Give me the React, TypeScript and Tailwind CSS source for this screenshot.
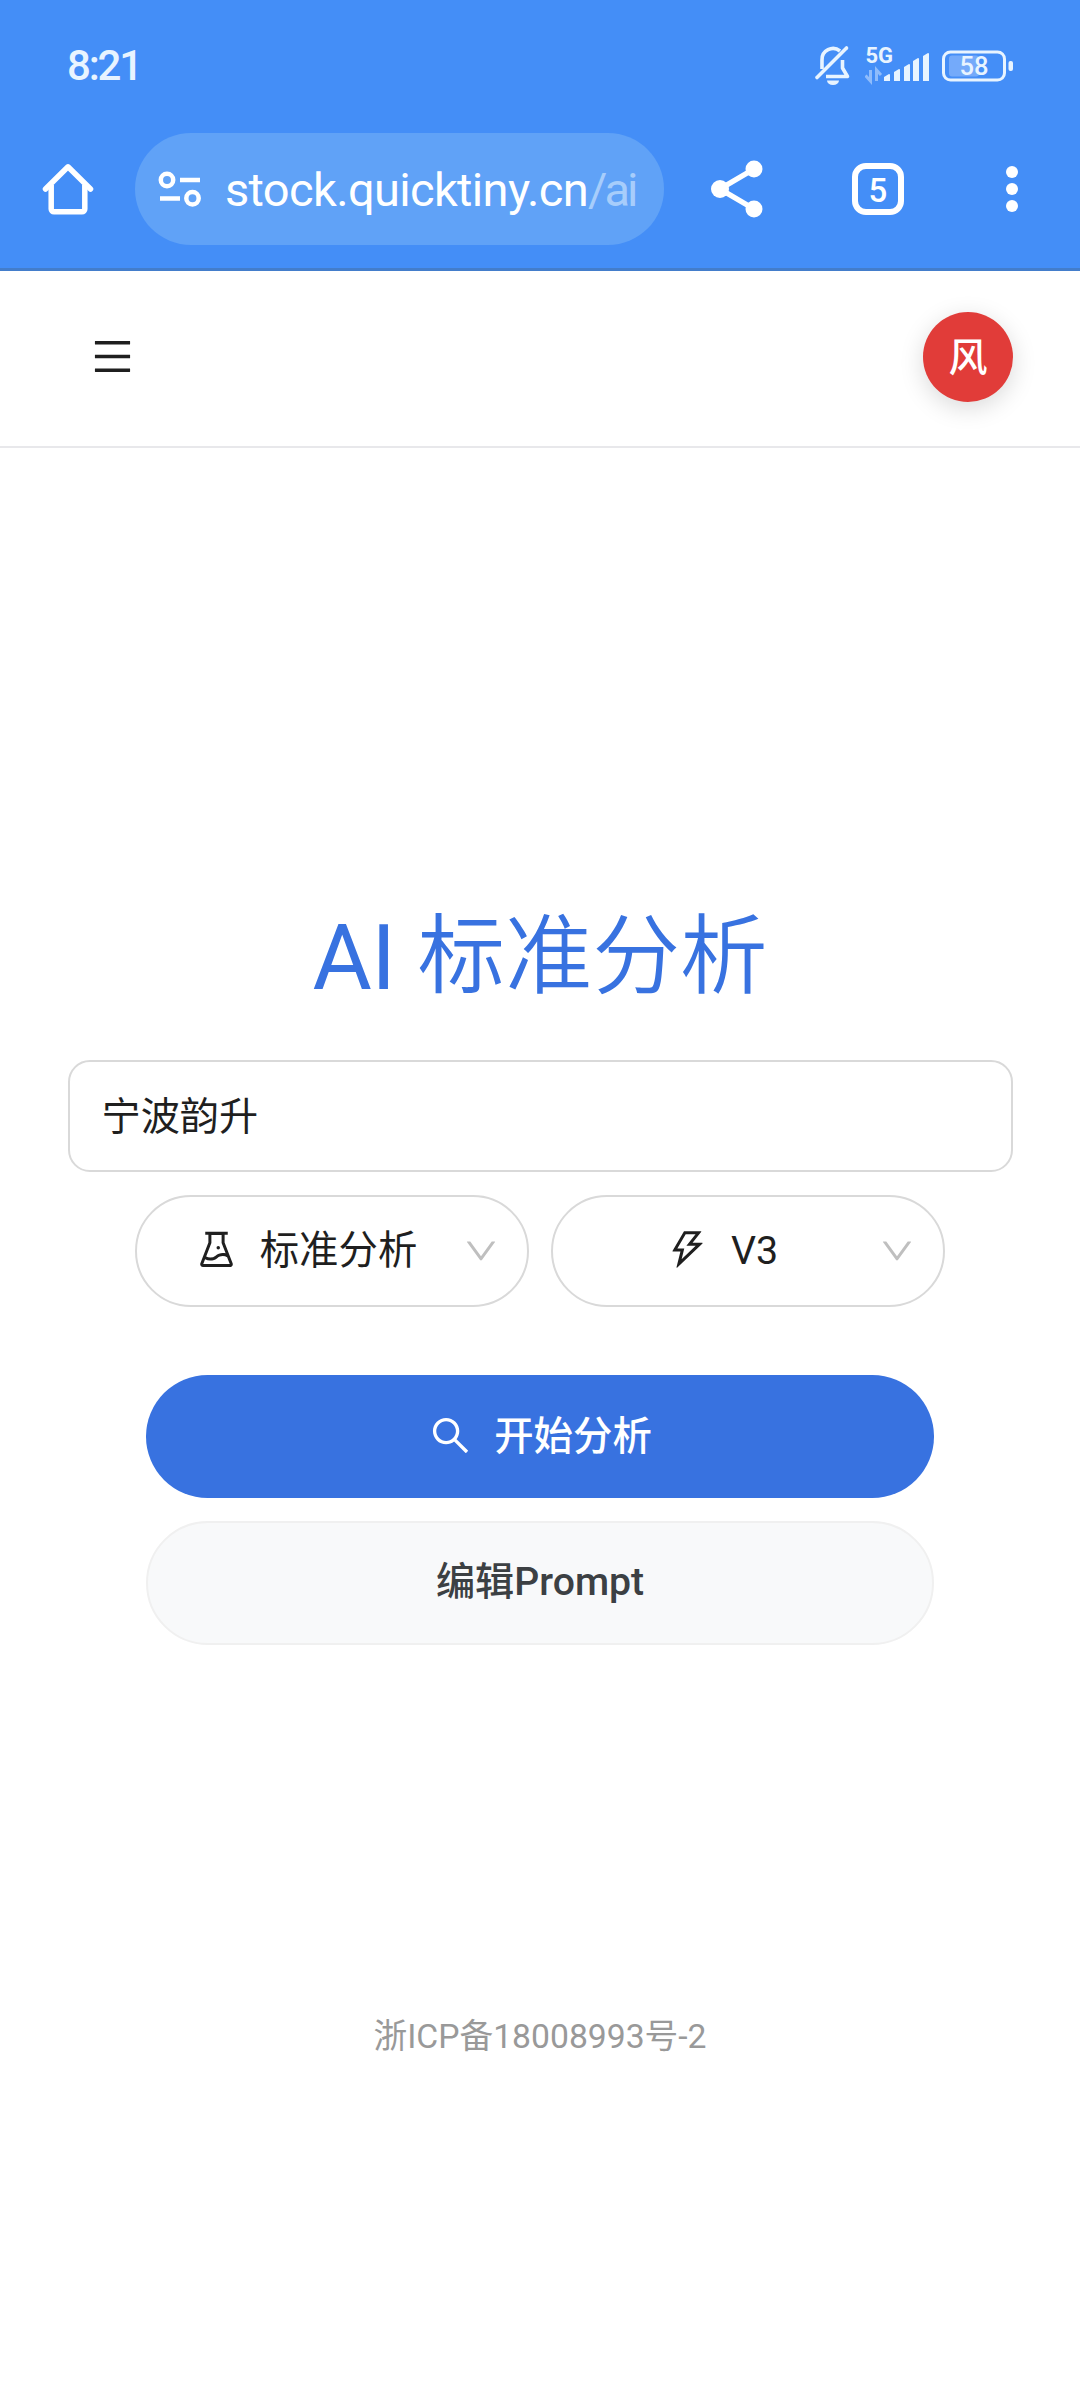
import type { ReactNode } from "react";
import {
  AiOutlineDown,
  AiOutlineExperiment,
  AiOutlineMenu,
  AiOutlineSearch,
  AiOutlineThunderbolt,
} from "react-icons/ai";

function StatusBar() {
  return (
    <div className="flex h-[132px] items-center justify-between pl-[67px] pr-[66px] text-[#e8f4ff]">
      <span className="text-[42px] font-medium leading-none tracking-[-2.2px]">8:21</span>
      <div className="mb-[4px] flex items-center">
        <svg width="38" height="42" viewBox="0 0 38 42" fill="none" className="mr-[13px]">
          <path d="M8 26V17a11 11 0 0 1 18-9" stroke="currentColor" strokeWidth="3.600" />
          <path d="M28.500 17v8l5 8.500H12" stroke="currentColor" strokeWidth="3.600" strokeLinejoin="round" />
          <path d="M3 34.500 32.500 5" stroke="currentColor" strokeWidth="3.600" strokeLinecap="round" />
          <path d="M13 37.500h12a6 4.500 0 0 1-12 0z" fill="currentColor" />
        </svg>
        <svg width="66" height="42" viewBox="0 0 66 42" className="mr-[11px]">
          <text x="0.500" y="20" fontSize="22" fontWeight="700" fill="currentColor">
            5G
          </text>
          <g stroke="#8fbcfb" strokeWidth="3" fill="none">
            <path d="M5.500 27v11L0.500 32.500M11.500 38V27l4.500 5" />
          </g>
          <g fill="currentColor">
            <path d="M19 34l5-3a1 1 0 0 1 1 1v6H19z" />
            <path d="M29 29l5-3a1 1 0 0 1 1 1v11H29z" />
            <path d="M39 24l5-3a1 1 0 0 1 1 1v16H39z" />
            <path d="M48 18l5-3a1 1 0 0 1 1 1v22H48z" />
            <path d="M58 13l5-3a1 1 0 0 1 1 1v27H58z" />
          </g>
        </svg>
        <svg width="72" height="42" viewBox="0 0 72 42">
          <rect x="1.500" y="9" width="61" height="28" rx="7" fill="none" stroke="currentColor" strokeWidth="3" />
          <rect x="7" y="12.500" width="30" height="21" rx="3" fill="#74aafa" />
          <rect x="66.500" y="18" width="4.500" height="10" rx="2" fill="currentColor" />
          <text x="32" y="32" textAnchor="middle" fontSize="25.500" fontWeight="500" fill="currentColor">
            58
          </text>
        </svg>
      </div>
    </div>
  );
}

function HomeIcon() {
  return (
    <svg width="52" height="52" viewBox="0 0 52 52" fill="none" stroke="white" strokeWidth="5.500" strokeLinejoin="round">
      <path d="M3.500 26 26 3.800 48.500 26" strokeLinecap="round" />
      <path d="M9.200 22v24a2.800 2.800 0 0 0 2.800 2.800h28a2.800 2.800 0 0 0 2.800-2.800V22" />
    </svg>
  );
}

function SiteSettingsIcon() {
  return (
    <svg width="44" height="36" viewBox="0 0 44 36" fill="none" stroke="white" strokeWidth="4.500">
      <circle cx="9" cy="9" r="6.200" />
      <path d="M22 9h20M2 27.500h20" />
      <circle cx="34.500" cy="27.200" r="6.200" />
    </svg>
  );
}

function ShareIcon() {
  return (
    <svg width="52" height="58" viewBox="0 0 52 58" fill="white">
      <path d="M43 9 9 29l34 20" fill="none" stroke="white" strokeWidth="5.500" />
      <circle cx="43" cy="9" r="8.500" />
      <circle cx="9" cy="29" r="9" />
      <circle cx="43" cy="49" r="8.500" />
    </svg>
  );
}

function BrowserBar() {
  return (
    <div className="flex h-[136px] items-start pt-px">
      <div className="flex h-[112px] w-[135px] items-center justify-center">
        <HomeIcon />
      </div>
      <div className="flex h-[112px] w-[529px] items-center rounded-full bg-[#60a2f7] pl-[23px] text-white">
        <SiteSettingsIcon />
        <span className="ml-[23px] whitespace-nowrap text-[47px] leading-none tracking-[-0.65px]">
          stock.quicktiny.cn<span className="tracking-[-3px] text-[#a7cdfb]">/ai</span>
        </span>
      </div>
      <div className="ml-[47px] flex h-[112px] items-center">
        <ShareIcon />
        <div className="ml-[89px] flex size-[52px] items-center justify-center rounded-[14px] border-[6px] border-white pt-[2px] text-[33px] font-medium leading-none text-white">
          5
        </div>
        <svg width="12" height="48" viewBox="0 0 12 48" fill="white" className="ml-[102px]">
          <circle cx="6" cy="7" r="6" />
          <circle cx="6" cy="24" r="6" />
          <circle cx="6" cy="41" r="6" />
        </svg>
      </div>
    </div>
  );
}

function SiteHeader() {
  return (
    <header className="flex h-[177px] items-center justify-between border-b-2 border-[#e8e8eb] pl-[90px] pr-[67px]">
      <AiOutlineMenu className="mb-[5px] size-[45px] text-[#1f1f1f]" />
      <div className="mt-[-3px] flex size-[90px] items-center justify-center rounded-full bg-[#e13c39] pt-[2px] text-[39px] font-medium leading-none text-white shadow-[0_6px_24px_rgba(0,0,0,0.15)]">
        风
      </div>
    </header>
  );
}

function ModelSelect({ icon, label }: { icon: ReactNode; label: string }) {
  return (
    <button className="flex h-[112px] w-[394px] items-center rounded-full border-2 border-[#d9d9d9] pr-[27px] text-[39.4px] text-[#1f1f1f]">
      <span className="flex flex-1 items-center justify-center gap-[21px] pl-[12px]">
        {icon}
        <span className="leading-none">{label}</span>
      </span>
      <AiOutlineDown className="size-[38px] text-[#bfbfbf]" />
    </button>
  );
}

export default function App() {
  return (
    <div className="flex h-[2400px] w-[1080px] flex-col bg-white font-[Roboto,'Noto_Sans_CJK_SC',sans-serif]">
      <div className="h-[271px] border-b-[3px] border-[#437dcb] bg-[#448ef7]">
        <StatusBar />
        <BrowserBar />
      </div>
      <SiteHeader />
      <main className="flex flex-col items-center px-[68px]">
        <h1 className="mt-[454px] flex h-[112px] items-center whitespace-pre text-[91px] font-normal leading-none text-[#3872e0]">
          <span className="tracking-[-0.5px]">AI </span>
          <span className="text-[87.5px] font-[350]">标准分析</span>
        </h1>
        <input
          className="mt-[46px] h-[112px] w-[945px] rounded-[22px] border-2 border-[#d9d9d9] px-[32px] pb-[6px] text-[39.2px] text-[#1f1f1f] outline-none"
          defaultValue="宁波韵升"
        />
        <div className="mt-[23px] flex gap-[22px]">
          <ModelSelect icon={<AiOutlineExperiment className="mb-[4px] size-[45px]" />} label="标准分析" />
          <ModelSelect icon={<AiOutlineThunderbolt className="mb-[4px] size-[45px]" />} label="V3" />
        </div>
        <button className="mt-[68px] flex h-[123px] w-[788px] items-center justify-center gap-[21px] rounded-full bg-[#3872e0] text-[39.4px] font-medium leading-none text-white">
          <AiOutlineSearch className="mb-[3px] size-[45px]" />
          开始分析
        </button>
        <button className="mt-[23px] flex h-[124px] w-[788px] items-center justify-center rounded-full border-2 border-[#f0f0f0] bg-[#f8f9fa] text-[39.2px] font-medium leading-none text-[#3c4043]">
          编辑Prompt
        </button>
      </main>
      <footer className="mt-[367px] text-center text-[33.7px] leading-[50px] text-[#999999]">
        浙ICP备18008993号-2
      </footer>
    </div>
  );
}
